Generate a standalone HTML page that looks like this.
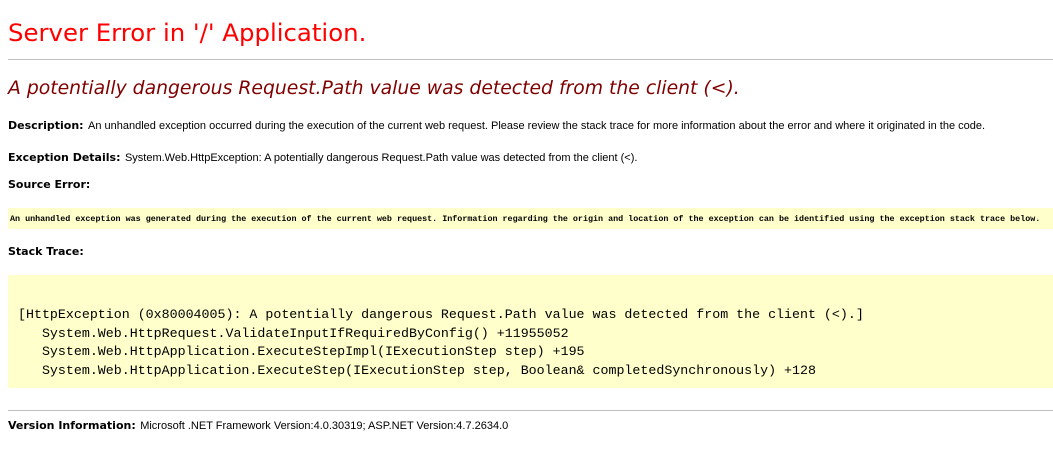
<!DOCTYPE html>
<html><head><style>
body{margin:0;width:1053px;height:453px;background:#fff;position:relative;overflow:hidden;font-family:"Liberation Sans",Arial,sans-serif;color:#000}
.a{position:absolute;white-space:nowrap}
.v{font-family:"DejaVu Sans",Verdana,sans-serif}
.b{font-weight:bold;font-size:11px}
.t{font-size:11px}
.hr{position:absolute;left:8px;right:0;height:1px;background:#c0c0c0}
.y{position:absolute;left:8px;right:0;background:#ffffcc;overflow:hidden}
pre{margin:0;font-family:"Liberation Mono",monospace}
</style></head><body>
<div class="a v" style="left:8px;top:18px;font-size:24.4px;color:red">Server Error in '/' Application.</div>
<div class="hr" style="top:59px"></div>
<div class="a v" style="left:8px;top:78px;font-size:18.8px;color:maroon;font-style:italic">A potentially dangerous Request.Path value was detected from the client (&lt;).</div>
<div class="a" style="left:8px;top:116px"><span class="v b">Description:</span> <span class="t">An unhandled exception occurred during the execution of the current web request. Please review the stack trace for more information about the error and where it originated in the code.</span></div>
<div class="a" style="left:8px;top:148px"><span class="v b">Exception Details:</span> <span class="t">System.Web.HttpException: A potentially dangerous Request.Path value was detected from the client (&lt;).</span></div>
<div class="a v b" style="left:8px;top:178px">Source Error:</div>
<div class="y" style="top:208px;height:21px"><pre style="font-size:8.4px;font-weight:bold;padding:6px 0 0 2px">An unhandled exception was generated during the execution of the current web request. Information regarding the origin and location of the exception can be identified using the exception stack trace below.</pre></div>
<div class="a v b" style="left:8px;top:245px">Stack Trace:</div>
<div class="y" style="top:275px;height:113px"><pre style="font-size:13.3px;line-height:18.5px;padding:31px 0 0 10px">[HttpException (0x80004005): A potentially dangerous Request.Path value was detected from the client (&lt;).]
   System.Web.HttpRequest.ValidateInputIfRequiredByConfig() +11955052
   System.Web.HttpApplication.ExecuteStepImpl(IExecutionStep step) +195
   System.Web.HttpApplication.ExecuteStep(IExecutionStep step, Boolean&amp; completedSynchronously) +128</pre></div>
<div class="hr" style="top:410px"></div>
<div class="a" style="left:8px;top:416px"><span class="v b">Version Information:</span> <span class="t">Microsoft .NET Framework Version:4.0.30319; ASP.NET Version:4.7.2634.0</span></div>
</body></html>
